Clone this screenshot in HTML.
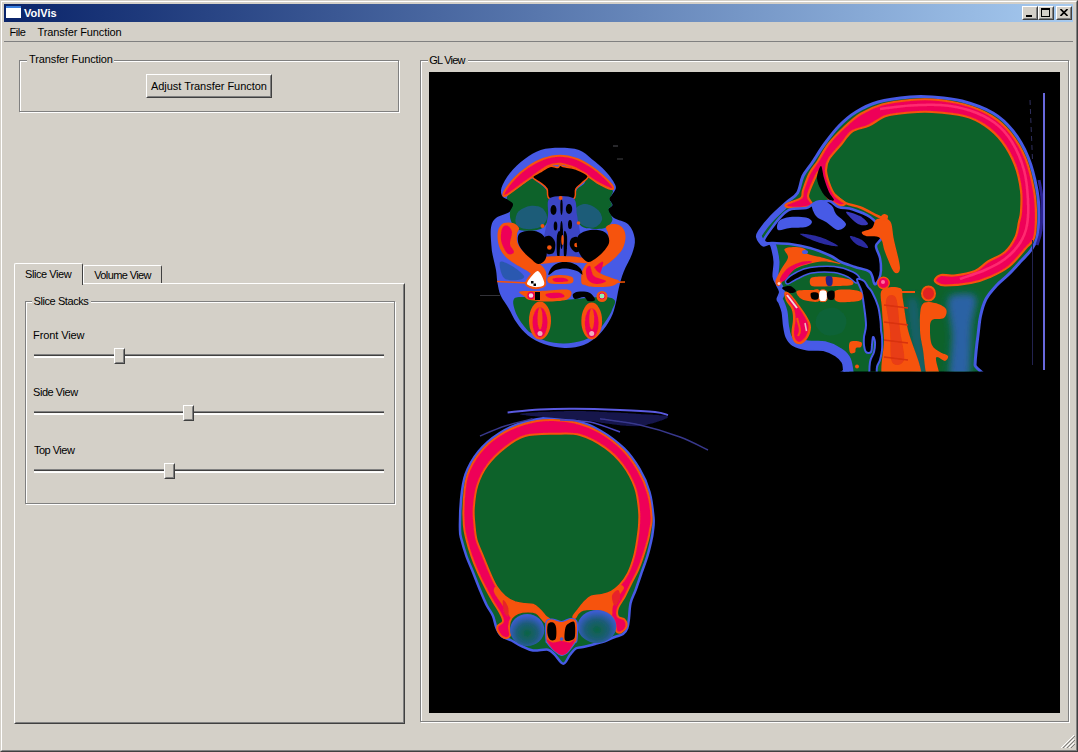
<!DOCTYPE html>
<html><head><meta charset="utf-8"><title>VolVis</title>
<style>
html,body{margin:0;padding:0;}
body{width:1078px;height:752px;overflow:hidden;background:#d4d0c8;font-family:"Liberation Sans","DejaVu Sans",sans-serif;font-size:11px;color:#000;position:relative;}
.abs{position:absolute;}
#win{position:absolute;left:0;top:0;width:1078px;height:752px;box-sizing:border-box;border:1px solid;border-color:#d4d0c8 #404040 #404040 #d4d0c8;}
#win2{position:absolute;left:1px;top:1px;width:1076px;height:750px;box-sizing:border-box;border:1px solid;border-color:#fff #808080 #808080 #fff;}
#title{position:absolute;left:4px;top:4px;width:1069px;height:18px;background:linear-gradient(90deg,#0a246a 0%,#a6caf0 100%);}
#title .t{position:absolute;left:20px;top:3px;line-height:12px;font-weight:bold;font-size:11px;color:#fff;letter-spacing:0px;}
#title .ico{position:absolute;left:2px;top:2px;width:15px;height:12px;background:#fff;border-top:2px solid #3a80e0;box-sizing:border-box;}
.tb{position:absolute;top:6px;width:16px;height:14px;box-sizing:border-box;background:#d4d0c8;border:1px solid;border-color:#fff #404040 #404040 #fff;}
.tb:after{content:"";position:absolute;left:0;top:0;right:0;bottom:0;border:1px solid;border-color:#d4d0c8 #808080 #808080 #d4d0c8;}
.menu{position:absolute;top:26px;font-size:11px;}
.hline{position:absolute;height:1px;}
.gb{position:absolute;box-sizing:border-box;border:1px solid #808080;box-shadow:1px 1px 0 #fff, inset 1px 1px 0 #fff;}
.gbl{position:absolute;background:#d4d0c8;padding:0 2px;font-size:11px;line-height:13px;}
.lbl{position:absolute;font-size:11px;line-height:13px;white-space:nowrap;}
.btn{position:absolute;box-sizing:border-box;background:#d4d0c8;border:1px solid;border-color:#fff #404040 #404040 #fff;text-align:center;font-size:11px;}
.btn:after{content:"";position:absolute;left:0;top:0;right:0;bottom:0;border:1px solid;border-color:#d4d0c8 #808080 #808080 #d4d0c8;}
.groove{position:absolute;height:4px;background:linear-gradient(#808080 0,#808080 1px,#404040 1px,#404040 2px,#f4f2ee 2px,#fff 3px,#fff 4px);}
.handle{position:absolute;width:11px;height:16px;box-sizing:border-box;background:#d4d0c8;border:1px solid;border-color:#fff #404040 #404040 #fff;}
.handle:after{content:"";position:absolute;left:0;top:0;right:0;bottom:0;border:1px solid;border-color:#d4d0c8 #808080 #808080 #d4d0c8;}
</style></head><body>
<div id="win"></div><div id="win2"></div>
<div id="title"><div class="ico"></div><div class="t">VolVis</div></div>
<div class="tb" style="left:1022px"><i style="position:absolute;left:3px;top:8px;width:6px;height:2px;background:#000"></i></div>
<div class="tb" style="left:1038px"><i style="position:absolute;left:2px;top:1px;width:9px;height:9px;box-sizing:border-box;border:1px solid #000;border-top-width:2px"></i></div>
<div class="tb" style="left:1056px"><svg style="position:absolute;left:3px;top:2px" width="8" height="7" viewBox="0 0 8 7"><path d="M0.5,0 L7.5,7 M7.5,0 L0.5,7" stroke="#000" stroke-width="1.6" fill="none"/></svg></div>
<div class="lbl" id="t1" style="left:9.4px;top:26px;letter-spacing:-0.420px">File</div>
<div class="lbl" id="t2" style="left:37.6px;top:26px;letter-spacing:-0.113px">Transfer Function</div>
<div class="hline" style="left:4px;top:41px;width:1069px;background:#808080"></div>

<div class="gb" style="left:19px;top:60px;width:380px;height:52px"></div>
<div class="gbl" style="left:27px;top:53px;width:87px;height:13px;padding:0"></div><div class="lbl" id="t3" style="left:29.0px;top:53px;letter-spacing:-0.113px">Transfer Function</div>
<div class="btn" style="left:146px;top:74px;width:126px;height:24px"></div><div class="lbl" id="t4" style="left:151.0px;top:80px;letter-spacing:-0.041px">Adjust Transfer Functon</div>

<!-- tabs -->
<div id="pane" class="abs" style="left:14px;top:283px;width:391px;height:441px;box-sizing:border-box;border:1px solid;border-color:#fff #404040 #404040 #fff"></div>
<div class="abs" style="left:15px;top:284px;width:389px;height:439px;box-sizing:border-box;border:1px solid;border-color:#d4d0c8 #808080 #808080 #d4d0c8"></div>
<div class="abs" id="tab1" style="left:14px;top:263px;width:69px;height:22px;box-sizing:border-box;background:#d4d0c8;border:1px solid;border-color:#fff #404040 #d4d0c8 #fff;border-bottom:none;border-radius:2px 2px 0 0"></div>
<div class="abs" id="tab2" style="left:83px;top:265px;width:79px;height:18px;box-sizing:border-box;background:#d4d0c8;border:1px solid;border-color:#fff #404040 #d4d0c8 #fff;border-bottom:none;border-radius:2px 2px 0 0"></div>
<div class="lbl" id="t5" style="left:25.1px;top:268px;letter-spacing:-0.450px">Slice View</div>
<div class="lbl" id="t6" style="left:94.2px;top:269px;letter-spacing:-0.612px">Volume View</div>

<div class="gb" style="left:25px;top:301px;width:370px;height:203px"></div>
<div class="gbl" style="left:32px;top:294px;width:59px;height:13px;padding:0"></div><div class="lbl" id="t7" style="left:33.5px;top:295px;letter-spacing:-0.417px">Slice Stacks</div>
<div class="lbl" id="t8" style="left:33.1px;top:329px;letter-spacing:-0.110px">Front View</div>
<div class="lbl" id="t9" style="left:33.1px;top:386px;letter-spacing:-0.461px">Side View</div>
<div class="lbl" id="t10" style="left:34.0px;top:444px;letter-spacing:-0.515px">Top View</div>
<div class="groove" style="left:34px;top:354px;width:350px"></div>
<div class="groove" style="left:34px;top:411px;width:350px"></div>
<div class="groove" style="left:34px;top:469px;width:350px"></div>
<div class="handle" style="left:114px;top:348px"></div>
<div class="handle" style="left:183px;top:405px"></div>
<div class="handle" style="left:164px;top:463px"></div>

<div class="gb" style="left:420px;top:60px;width:649px;height:662px"></div>
<div class="gbl" style="left:428px;top:53px;width:40px;height:13px;padding:0"></div><div class="lbl" id="t11" style="left:429.2px;top:54px;letter-spacing:-0.765px">GL View</div>
<svg id="gl" class="abs" style="left:429px;top:72px" width="631" height="641" viewBox="429 72 631 641">
<rect x="429" y="72" width="631" height="641" fill="#000"/>
<defs><filter id="bl" x="-5%" y="-5%" width="110%" height="110%"><feGaussianBlur stdDeviation="0.7"/></filter></defs>
<g filter="url(#bl)">
<clipPath id="sclip"><rect x="740" y="80" width="320" height="291.5"/></clipPath><g clip-path="url(#sclip)">
<clipPath id="silclip"><path d="M910.0,97.0 C919.0,96.2 923.3,96.3 932.0,97.0 C940.7,97.7 951.8,98.3 962.0,101.0 C972.2,103.7 984.5,108.0 993.0,113.0 C1001.5,118.0 1007.2,123.7 1013.0,131.0 C1018.8,138.3 1024.0,147.2 1028.0,157.0 C1032.0,166.8 1035.2,180.2 1037.0,190.0 C1038.8,199.8 1039.0,208.0 1039.0,216.0 C1039.0,224.0 1038.3,232.3 1037.0,238.0 C1035.7,243.7 1033.5,246.3 1031.0,250.0 C1028.5,253.7 1025.7,256.0 1022.0,260.0 C1018.3,264.0 1013.3,269.7 1009.0,274.0 C1004.7,278.3 999.8,281.8 996.0,286.0 C992.2,290.2 988.6,294.0 986.0,299.0 C983.4,304.0 981.8,310.0 980.5,316.0 C979.2,322.0 978.8,329.0 978.0,335.0 C977.2,341.0 976.5,347.0 976.0,352.0 C975.5,357.0 975.2,360.3 975.0,365.0 C974.8,369.7 996.5,377.5 975.0,380.0 C953.5,382.5 867.8,381.7 846.0,380.0 C824.2,378.3 845.0,373.0 844.5,370.0 C844.0,367.0 844.4,364.5 843.0,362.0 C841.6,359.5 839.2,357.1 836.0,355.0 C832.8,352.9 828.3,350.5 823.5,349.5 C818.7,348.5 812.1,349.8 807.0,349.0 C801.9,348.2 796.3,346.5 793.0,344.5 C789.7,342.5 788.4,340.1 787.0,337.0 C785.6,333.9 785.2,330.2 784.5,326.0 C783.8,321.8 783.8,315.8 783.0,312.0 C782.2,308.2 780.8,305.2 780.0,303.0 C779.2,300.8 777.9,300.8 778.0,299.0 C778.1,297.2 780.6,294.3 780.5,292.0 C780.4,289.7 778.6,287.6 777.5,285.0 C776.4,282.4 774.4,280.3 774.0,276.5 C773.6,272.7 775.2,266.4 775.0,262.0 C774.8,257.6 773.8,253.1 773.0,250.0 C772.2,246.9 771.7,244.3 770.0,243.5 C768.3,242.7 765.1,246.1 763.0,245.0 C760.9,243.9 758.0,239.4 757.5,237.0 C757.0,234.6 757.8,233.8 760.0,230.5 C762.2,227.2 766.5,221.8 771.0,217.0 C775.5,212.2 782.6,206.0 787.0,202.0 C791.4,198.0 794.8,197.3 797.5,193.0 C800.2,188.7 800.6,181.0 803.0,176.0 C805.4,171.0 808.4,168.3 812.0,163.0 C815.6,157.7 820.0,150.2 824.5,144.0 C829.0,137.8 833.8,131.3 839.0,126.0 C844.2,120.7 849.5,116.0 856.0,112.0 C862.5,108.0 869.0,104.5 878.0,102.0 C887.0,99.5 901.0,97.8 910.0,97.0 Z"/></clipPath>
<path d="M910.0,97.0 C919.0,96.2 923.3,96.3 932.0,97.0 C940.7,97.7 951.8,98.3 962.0,101.0 C972.2,103.7 984.5,108.0 993.0,113.0 C1001.5,118.0 1007.2,123.7 1013.0,131.0 C1018.8,138.3 1024.0,147.2 1028.0,157.0 C1032.0,166.8 1035.2,180.2 1037.0,190.0 C1038.8,199.8 1039.0,208.0 1039.0,216.0 C1039.0,224.0 1038.3,232.3 1037.0,238.0 C1035.7,243.7 1033.5,246.3 1031.0,250.0 C1028.5,253.7 1025.7,256.0 1022.0,260.0 C1018.3,264.0 1013.3,269.7 1009.0,274.0 C1004.7,278.3 999.8,281.8 996.0,286.0 C992.2,290.2 988.6,294.0 986.0,299.0 C983.4,304.0 981.8,310.0 980.5,316.0 C979.2,322.0 978.8,329.0 978.0,335.0 C977.2,341.0 976.5,347.0 976.0,352.0 C975.5,357.0 975.2,360.3 975.0,365.0 C974.8,369.7 996.5,377.5 975.0,380.0 C953.5,382.5 867.8,381.7 846.0,380.0 C824.2,378.3 845.0,373.0 844.5,370.0 C844.0,367.0 844.4,364.5 843.0,362.0 C841.6,359.5 839.2,357.1 836.0,355.0 C832.8,352.9 828.3,350.5 823.5,349.5 C818.7,348.5 812.1,349.8 807.0,349.0 C801.9,348.2 796.3,346.5 793.0,344.5 C789.7,342.5 788.4,340.1 787.0,337.0 C785.6,333.9 785.2,330.2 784.5,326.0 C783.8,321.8 783.8,315.8 783.0,312.0 C782.2,308.2 780.8,305.2 780.0,303.0 C779.2,300.8 777.9,300.8 778.0,299.0 C778.1,297.2 780.6,294.3 780.5,292.0 C780.4,289.7 778.6,287.6 777.5,285.0 C776.4,282.4 774.4,280.3 774.0,276.5 C773.6,272.7 775.2,266.4 775.0,262.0 C774.8,257.6 773.8,253.1 773.0,250.0 C772.2,246.9 771.7,244.3 770.0,243.5 C768.3,242.7 765.1,246.1 763.0,245.0 C760.9,243.9 758.0,239.4 757.5,237.0 C757.0,234.6 757.8,233.8 760.0,230.5 C762.2,227.2 766.5,221.8 771.0,217.0 C775.5,212.2 782.6,206.0 787.0,202.0 C791.4,198.0 794.8,197.3 797.5,193.0 C800.2,188.7 800.6,181.0 803.0,176.0 C805.4,171.0 808.4,168.3 812.0,163.0 C815.6,157.7 820.0,150.2 824.5,144.0 C829.0,137.8 833.8,131.3 839.0,126.0 C844.2,120.7 849.5,116.0 856.0,112.0 C862.5,108.0 869.0,104.5 878.0,102.0 C887.0,99.5 901.0,97.8 910.0,97.0 Z" fill="#0a622c" stroke="#465ae6" stroke-width="3"/>
<path d="M787.0,202.0 C784.3,204.5 775.5,212.2 771.0,217.0 C766.5,221.8 762.2,227.2 760.0,230.5 C757.8,233.8 757.0,234.6 757.5,237.0 C758.0,239.4 760.9,243.9 763.0,245.0 C765.1,246.1 768.3,242.7 770.0,243.5 C771.7,244.3 772.2,246.9 773.0,250.0 C773.8,253.1 774.8,257.6 775.0,262.0 C775.2,266.4 773.6,272.7 774.0,276.5 C774.4,280.3 776.4,282.4 777.5,285.0 C778.6,287.6 780.4,289.7 780.5,292.0 C780.6,294.3 778.1,297.2 778.0,299.0 C777.9,300.8 779.2,300.8 780.0,303.0 C780.8,305.2 782.2,308.2 783.0,312.0 C783.8,315.8 783.8,321.8 784.5,326.0 C785.2,330.2 785.6,333.9 787.0,337.0 C788.4,340.1 789.7,342.5 793.0,344.5 C796.3,346.5 801.9,348.2 807.0,349.0 C812.1,349.8 818.7,348.5 823.5,349.5 C828.3,350.5 832.8,352.9 836.0,355.0 C839.2,357.1 841.6,359.5 843.0,362.0 C844.4,364.5 844.0,367.0 844.5,370.0 C845.0,373.0 845.8,378.3 846.0,380.0" fill="none" stroke="#465ae6" stroke-width="9" clip-path="url(#silclip)" stroke-linejoin="round"/>
<path d="M793.0,344.5 C795.3,345.2 801.9,348.2 807.0,349.0 C812.1,349.8 818.7,348.5 823.5,349.5 C828.3,350.5 832.8,352.9 836.0,355.0 C839.2,357.1 841.3,357.8 843.0,362.0 C844.7,366.2 845.5,377.0 846.0,380.0" fill="none" stroke="#465ae6" stroke-width="17" clip-path="url(#silclip)"/>
<defs><linearGradient id="nk" x1="0" x2="1"><stop offset="0" stop-color="#0a642c"/><stop offset="0.45" stop-color="#2c6098"/><stop offset="0.8" stop-color="#146460"/><stop offset="1" stop-color="#0a642c"/></linearGradient></defs>
<filter id="bl3" x="-30%" y="-30%" width="160%" height="160%"><feGaussianBlur stdDeviation="3.5"/></filter>
<g clip-path="url(#silclip)">
<path d="M948.0,300.0 C949.7,293.2 957.3,294.3 962.0,294.0 C966.7,293.7 974.3,292.8 976.0,298.0 C977.7,303.2 973.3,310.5 972.0,325.0 C970.7,339.5 971.7,375.0 968.0,385.0 C964.3,395.0 952.7,393.3 950.0,385.0 C947.3,376.7 952.3,349.2 952.0,335.0 C951.7,320.8 946.3,306.8 948.0,300.0 Z" fill="#2c62a4" filter="url(#bl3)"/>
</g>
<path d="M907.0,300.0 C908.3,294.2 915.5,295.0 918.0,300.0 C920.5,305.0 920.3,317.3 922.0,330.0 C923.7,342.7 928.7,368.3 928.0,376.0 C927.3,383.7 921.0,382.8 918.0,376.0 C915.0,369.2 911.8,347.7 910.0,335.0 C908.2,322.3 905.7,305.8 907.0,300.0 Z" fill="#14606a" filter="url(#bl3)"/>
<path d="M820.0,312.0 C823.2,309.2 830.7,307.0 835.0,308.0 C839.3,309.0 844.8,314.0 846.0,318.0 C847.2,322.0 845.3,329.2 842.0,332.0 C838.7,334.8 830.3,336.2 826.0,335.0 C821.7,333.8 817.0,328.8 816.0,325.0 C815.0,321.2 816.8,314.8 820.0,312.0 Z" fill="#0b6338"/>
<path d="M910.0,100.0 C918.3,99.2 923.0,98.8 932.0,99.5 C941.0,100.2 954.1,101.8 964.0,104.5 C973.9,107.2 983.8,111.2 991.5,116.0 C999.2,120.8 1004.8,125.9 1010.5,133.0 C1016.2,140.1 1021.6,148.9 1025.5,158.5 C1029.4,168.1 1032.2,180.9 1034.0,190.5 C1035.8,200.1 1036.0,208.1 1036.0,216.0 C1036.0,223.9 1035.7,232.7 1034.0,238.0 C1032.3,243.3 1030.2,243.2 1026.0,248.0 C1021.8,252.8 1015.0,261.7 1009.0,266.5 C1003.0,271.3 996.3,274.2 990.0,277.0 C983.7,279.8 978.5,281.6 971.0,283.0 C963.5,284.4 950.7,285.5 945.0,285.5 C939.3,285.5 938.7,284.0 937.0,283.0 C935.3,282.0 934.3,280.8 935.0,279.5 C935.7,278.2 937.8,275.7 941.0,275.0 C944.2,274.3 948.3,276.2 954.0,275.5 C959.7,274.8 969.3,273.3 975.0,271.0 C980.7,268.7 983.0,264.7 988.0,261.5 C993.0,258.3 1000.4,256.1 1005.0,252.0 C1009.6,247.9 1013.2,242.0 1015.5,237.0 C1017.8,232.0 1018.1,226.2 1019.0,222.0 C1019.9,217.8 1020.7,217.2 1021.0,212.0 C1021.3,206.8 1022.0,198.3 1021.0,190.5 C1020.0,182.7 1018.2,173.2 1015.0,165.0 C1011.8,156.8 1007.0,148.1 1002.0,141.5 C997.0,134.9 991.3,129.8 985.0,125.5 C978.7,121.2 972.8,118.2 964.0,116.0 C955.2,113.8 941.0,112.6 932.0,112.0 C923.0,111.4 917.7,111.8 910.0,112.5 C902.3,113.2 892.8,113.8 886.0,116.0 C879.2,118.2 874.7,122.9 869.0,125.5 C863.3,128.1 856.6,128.4 852.0,131.5 C847.4,134.6 845.3,139.4 841.5,144.0 C837.7,148.6 831.6,154.7 829.0,159.0 C826.4,163.3 826.0,166.0 826.0,170.0 C826.0,174.0 827.5,178.8 829.0,183.0 C830.5,187.2 832.3,191.7 835.0,195.0 C837.7,198.3 844.3,201.3 845.0,203.0 C845.7,204.7 841.8,205.8 839.0,205.0 C836.2,204.2 830.8,201.2 828.0,198.0 C825.2,194.8 823.5,190.3 822.0,186.0 C820.5,181.7 820.3,173.0 819.0,172.0 C817.7,171.0 815.8,176.0 814.0,180.0 C812.2,184.0 808.3,192.0 808.0,196.0 C807.7,200.0 812.3,202.2 812.0,204.0 C811.7,205.8 809.7,206.4 806.0,207.0 C802.3,207.6 793.3,207.9 790.0,207.5 C786.7,207.1 784.2,206.1 786.0,204.5 C787.8,202.9 798.2,200.3 801.0,198.0 C803.8,195.7 801.6,194.6 803.0,190.5 C804.4,186.4 807.0,178.4 809.5,173.5 C812.0,168.6 814.8,165.9 818.0,161.0 C821.2,156.1 824.2,149.5 828.5,144.0 C832.8,138.5 838.2,133.0 843.5,128.0 C848.8,123.0 854.1,117.9 860.5,114.0 C866.9,110.1 873.8,106.8 882.0,104.5 C890.2,102.2 901.7,100.8 910.0,100.0 Z" fill="#ee0458" stroke="#f65208" stroke-width="2.2"/>
<path d="M880.0,109.0 C885.0,108.4 900.0,106.2 910.0,105.5 C920.0,104.8 930.0,104.2 940.0,105.0 C950.0,105.8 960.8,107.5 970.0,110.5 C979.2,113.5 988.0,117.8 995.0,123.0 C1002.0,128.2 1007.2,134.2 1012.0,142.0 C1016.8,149.8 1021.3,160.3 1024.0,170.0 C1026.7,179.7 1027.5,190.8 1028.0,200.0 C1028.5,209.2 1028.3,217.8 1027.0,225.0 C1025.7,232.2 1023.7,237.3 1020.0,243.0 C1016.3,248.7 1010.8,254.5 1005.0,259.0 C999.2,263.5 992.5,266.7 985.0,270.0 C977.5,273.3 964.2,277.5 960.0,279.0" fill="none" stroke="#ff2a70" stroke-width="2.5"/>
<path d="M821.0,166.0 C822.2,166.0 822.7,173.7 824.0,178.0 C825.3,182.3 827.3,188.3 829.0,192.0 C830.7,195.7 834.2,198.8 834.0,200.0 C833.8,201.2 830.2,200.7 828.0,199.0 C825.8,197.3 822.8,193.5 821.0,190.0 C819.2,186.5 817.0,182.0 817.0,178.0 C817.0,174.0 819.8,166.0 821.0,166.0 Z" fill="#000"/>
<path d="M835.0,195.0 C836.8,196.3 841.2,200.9 845.5,203.0 C849.8,205.1 855.2,205.3 860.5,207.5 C865.8,209.7 872.9,213.8 877.5,216.0 C882.1,218.2 886.2,220.2 888.0,221.0" fill="none" stroke="#f65208" stroke-width="2.5"/>
<path d="M766.0,243.0 C764.5,242.4 763.2,241.8 764.0,239.5 C764.8,237.2 768.2,232.8 771.0,229.0 C773.8,225.2 777.3,220.2 780.5,217.0 C783.7,213.8 785.8,211.0 790.0,209.5 C794.2,208.0 802.0,208.9 806.0,208.0 C810.0,207.1 810.2,205.2 814.0,204.0 C817.8,202.8 824.9,200.5 829.0,201.0 C833.1,201.5 834.5,205.6 838.5,207.0 C842.5,208.4 847.8,207.8 853.0,209.5 C858.2,211.2 865.4,213.8 870.0,217.0 C874.6,220.2 878.6,225.0 880.5,228.5 C882.4,232.0 882.2,235.1 881.5,238.0 C880.8,240.9 876.2,242.7 876.0,246.0 C875.8,249.3 879.2,254.0 880.0,258.0 C880.8,262.0 881.2,266.5 881.0,270.0 C880.8,273.5 880.1,276.7 879.0,279.0 C877.9,281.3 876.0,285.2 874.5,284.0 C873.0,282.8 873.2,274.8 870.0,272.0 C866.8,269.2 859.8,268.7 855.0,267.0 C850.2,265.3 845.2,263.9 841.0,262.0 C836.8,260.1 835.2,257.8 830.0,255.5 C824.8,253.2 816.7,249.9 810.0,248.0 C803.3,246.1 796.2,244.8 790.0,244.0 C783.8,243.2 777.0,243.2 773.0,243.0 C769.0,242.8 767.5,243.6 766.0,243.0 Z" fill="#000" stroke="#465ae6" stroke-width="2.5"/>
<path d="M779.0,221.0 C781.0,218.8 785.5,217.6 790.0,217.0 C794.5,216.4 802.3,216.7 806.0,217.5 C809.7,218.3 812.0,220.4 812.0,222.0 C812.0,223.6 809.7,226.0 806.0,227.0 C802.3,228.0 794.7,227.5 790.0,228.0 C785.3,228.5 779.8,231.2 778.0,230.0 C776.2,228.8 777.0,223.2 779.0,221.0 Z" fill="#465ae6"/>
<path d="M812.0,204.0 C813.0,201.3 818.7,199.7 822.0,200.0 C825.3,200.3 829.7,203.7 832.0,206.0 C834.3,208.3 833.7,211.0 836.0,214.0 C838.3,217.0 845.7,221.3 846.0,224.0 C846.3,226.7 841.3,230.3 838.0,230.0 C834.7,229.7 829.7,224.3 826.0,222.0 C822.3,219.7 818.3,219.0 816.0,216.0 C813.7,213.0 811.0,206.7 812.0,204.0 Z" fill="#465ae6"/>
<path d="M846.0,212.0 C846.3,210.7 856.3,214.0 860.0,216.0 C863.7,218.0 868.3,222.7 868.0,224.0 C867.7,225.3 861.7,226.0 858.0,224.0 C854.3,222.0 845.7,213.3 846.0,212.0 Z" fill="#3838b8"/>
<path d="M800.0,234.0 C800.0,233.0 813.7,235.0 820.0,237.0 C826.3,239.0 838.0,245.0 838.0,246.0 C838.0,247.0 826.3,245.0 820.0,243.0 C813.7,241.0 800.0,235.0 800.0,234.0 Z" fill="#2c2ca0"/>
<path d="M850.0,236.0 C851.0,235.3 859.0,238.0 862.0,240.0 C865.0,242.0 869.0,247.3 868.0,248.0 C867.0,248.7 859.0,246.0 856.0,244.0 C853.0,242.0 849.0,236.7 850.0,236.0 Z" fill="#2c2ca0"/>
<path d="M877.0,219.0 C880.0,217.8 887.2,217.5 890.0,221.0 C892.8,224.5 892.3,232.2 894.0,240.0 C895.7,247.8 900.0,262.7 900.0,268.0 C900.0,273.3 896.5,274.7 894.0,272.0 C891.5,269.3 887.3,257.7 885.0,252.0 C882.7,246.3 883.2,240.7 880.0,238.0 C876.8,235.3 869.0,237.0 866.0,236.0 C863.0,235.0 861.0,233.3 862.0,232.0 C863.0,230.7 869.5,230.2 872.0,228.0 C874.5,225.8 874.0,220.2 877.0,219.0 Z" fill="#f65208"/>
<path d="M880.0,218.0 C879.7,216.8 882.7,214.3 884.0,214.0 C885.3,213.7 887.7,214.8 888.0,216.0 C888.3,217.2 887.3,220.7 886.0,221.0 C884.7,221.3 880.3,219.2 880.0,218.0 Z" fill="#f65208"/>
<path d="M786.0,280.0 C787.5,278.0 793.0,274.1 797.0,272.0 C801.0,269.9 803.8,268.4 810.0,267.5 C816.2,266.6 826.8,265.8 834.0,266.5 C841.2,267.2 848.7,269.9 853.0,272.0 C857.3,274.1 859.5,277.2 860.0,279.0 C860.5,280.8 858.0,283.3 856.0,283.0 C854.0,282.7 851.7,278.8 848.0,277.0 C844.3,275.2 840.0,273.2 834.0,272.5 C828.0,271.8 818.2,271.9 812.0,273.0 C805.8,274.1 801.0,277.2 797.0,279.0 C793.0,280.8 789.8,283.8 788.0,284.0 C786.2,284.2 784.5,282.0 786.0,280.0 Z" fill="#000" stroke="#465ae6" stroke-width="1.5"/>
<path d="M857.0,279.5 C857.4,277.8 862.2,279.8 864.0,281.0 C865.8,282.2 866.7,285.2 868.0,287.0 C869.3,288.8 870.3,288.8 872.0,292.0 C873.7,295.2 876.6,301.2 878.0,306.0 C879.4,310.8 880.0,317.0 880.5,321.0 C881.0,325.0 880.8,327.3 881.0,330.0 C881.2,332.7 881.8,333.7 882.0,337.0 C882.2,340.3 882.3,346.2 882.0,350.0 C881.7,353.8 880.8,357.2 880.0,360.0 C879.2,362.8 877.7,363.7 877.0,367.0 C876.3,370.3 877.2,377.8 876.0,380.0 C874.8,382.2 871.0,383.0 870.0,380.0 C869.0,377.0 869.3,366.7 870.0,362.0 C870.7,357.3 873.2,355.3 874.0,352.0 C874.8,348.7 875.2,344.5 875.0,342.0 C874.8,339.5 873.5,336.5 873.0,337.0 C872.5,337.5 872.3,342.5 872.0,345.0 C871.7,347.5 872.0,350.8 871.0,352.0 C870.0,353.2 867.2,353.2 866.0,352.0 C864.8,350.8 864.3,347.5 864.0,345.0 C863.7,342.5 863.7,340.3 864.0,337.0 C864.3,333.7 866.0,330.2 866.0,325.0 C866.0,319.8 864.8,311.7 864.0,306.0 C863.2,300.3 862.7,295.4 861.5,291.0 C860.3,286.6 856.6,281.2 857.0,279.5 Z" fill="#000" stroke="#465ae6" stroke-width="2"/>
<path d="M782.0,288.0 C782.0,286.8 787.7,285.5 790.0,286.0 C792.3,286.5 796.0,289.8 796.0,291.0 C796.0,292.2 792.3,293.5 790.0,293.0 C787.7,292.5 782.0,289.2 782.0,288.0 Z" fill="#000"/>
<path d="M784.5,249.0 C785.8,247.2 792.6,247.0 796.0,247.0 C799.4,247.0 803.0,247.8 805.0,249.0 C807.0,250.2 804.8,252.5 808.0,254.0 C811.2,255.5 818.5,256.3 824.0,258.0 C829.5,259.7 841.3,263.4 841.0,264.0 C840.7,264.6 829.2,260.9 822.0,261.5 C814.8,262.1 804.0,265.0 798.0,267.5 C792.0,270.0 789.2,273.4 786.0,276.5 C782.8,279.6 780.8,285.2 779.0,286.0 C777.2,286.8 775.2,284.2 775.5,281.5 C775.8,278.8 778.9,273.5 781.0,269.5 C783.1,265.5 787.4,260.9 788.0,257.5 C788.6,254.1 783.2,250.8 784.5,249.0 Z" fill="#f65208"/>
<path d="M780.0,279.0 C780.7,276.8 784.2,270.9 788.0,268.0 C791.8,265.1 799.0,262.5 803.0,261.5 C807.0,260.5 813.2,260.9 812.0,262.0 C810.8,263.1 800.7,264.8 796.0,268.0 C791.3,271.2 786.7,279.2 784.0,281.0 C781.3,282.8 779.3,281.2 780.0,279.0 Z" fill="#ee0458"/>
<circle cx="779" cy="283.5" r="1.5" fill="#ffd0d8"/>
<ellipse cx="805" cy="252" rx="3" ry="2" fill="#465ae6"/>
<path d="M811.0,278.0 C812.8,276.5 817.8,276.7 822.0,276.5 C826.2,276.3 831.2,276.4 836.0,277.0 C840.8,277.6 848.3,278.7 851.0,280.0 C853.7,281.3 854.5,284.0 852.0,285.0 C849.5,286.0 841.3,285.8 836.0,286.0 C830.7,286.2 824.2,286.6 820.0,286.5 C815.8,286.4 812.5,286.9 811.0,285.5 C809.5,284.1 809.2,279.5 811.0,278.0 Z" fill="#f65208"/>
<path d="M826.0,277.0 C826.8,275.7 831.0,275.7 832.0,277.0 C833.0,278.3 832.8,283.7 832.0,285.0 C831.2,286.3 828.0,286.3 827.0,285.0 C826.0,283.7 825.2,278.3 826.0,277.0 Z" fill="#20208a"/>
<path d="M797.0,291.0 C799.0,289.7 808.3,290.2 812.0,290.0 C815.7,289.8 817.8,288.2 819.0,290.0 C820.2,291.8 820.8,299.2 819.0,301.0 C817.2,302.8 811.2,301.5 808.0,301.0 C804.8,300.5 801.8,299.7 800.0,298.0 C798.2,296.3 795.0,292.3 797.0,291.0 Z" fill="#f65208"/>
<path d="M835.0,291.0 C837.0,289.1 843.7,289.3 848.0,289.5 C852.3,289.7 858.8,290.2 861.0,292.0 C863.2,293.8 863.2,298.3 861.0,300.0 C858.8,301.7 852.2,301.8 848.0,302.0 C843.8,302.2 838.2,302.8 836.0,301.0 C833.8,299.2 833.0,292.9 835.0,291.0 Z" fill="#f65208"/>
<path d="M819.5,291.0 C820.7,289.4 825.3,289.4 826.5,291.0 C827.7,292.6 827.7,298.9 826.5,300.5 C825.3,302.1 820.7,302.1 819.5,300.5 C818.3,298.9 818.3,292.6 819.5,291.0 Z" fill="#fff" stroke="#f65208" stroke-width="1"/>
<path d="M827.5,292.0 C828.5,290.7 832.9,289.8 834.0,291.0 C835.1,292.2 835.0,297.7 834.0,299.0 C833.0,300.3 829.1,300.2 828.0,299.0 C826.9,297.8 826.5,293.3 827.5,292.0 Z" fill="#000"/>
<path d="M811.0,293.0 C812.0,292.0 816.8,292.0 818.0,293.0 C819.2,294.0 819.0,298.0 818.0,299.0 C817.0,300.0 813.2,300.0 812.0,299.0 C810.8,298.0 810.0,294.0 811.0,293.0 Z" fill="#000"/>
<path d="M784.5,292.3 C785.2,291.1 787.4,291.4 790.0,293.7 C792.6,296.0 797.0,302.1 800.0,306.3 C803.0,310.5 806.5,315.5 808.3,319.0 C810.1,322.5 811.0,324.3 811.0,327.3 C811.0,330.3 809.9,334.2 808.3,337.0 C806.7,339.8 803.6,343.2 801.3,344.0 C799.0,344.8 795.9,343.8 794.3,342.0 C792.7,340.2 791.7,336.8 791.5,333.0 C791.3,329.2 793.0,323.0 793.0,319.0 C793.0,315.0 792.7,312.1 791.5,309.0 C790.3,305.9 787.2,303.5 786.0,300.7 C784.8,297.9 783.8,293.5 784.5,292.3 Z" fill="#f65208"/>
<path d="M786.5,294.5 C786.8,293.8 787.9,293.8 790.0,296.0 C792.1,298.2 796.2,304.0 799.0,308.0 C801.8,312.0 804.9,316.8 806.5,320.0 C808.1,323.2 808.6,324.8 808.5,327.5 C808.4,330.2 807.3,333.7 806.0,336.0 C804.7,338.3 802.2,340.8 800.5,341.5 C798.8,342.2 797.1,341.4 796.0,340.0 C794.9,338.6 794.1,336.5 794.0,333.0 C793.9,329.5 795.5,323.0 795.5,319.0 C795.5,315.0 795.2,312.2 794.0,309.0 C792.8,305.8 789.2,302.4 788.0,300.0 C786.8,297.6 786.2,295.2 786.5,294.5 Z" fill="#ee0458"/>
<path d="M787.0,295.0 L797.0,308.0" fill="none" stroke="#f4dcd8" stroke-width="2"/>
<path d="M805.0,323.0 L806.5,331.0" fill="none" stroke="#f0b8c0" stroke-width="1.5"/>
<path d="M797.0,318.0 C797.5,320.0 799.8,327.0 800.0,330.0 C800.2,333.0 798.3,335.0 798.0,336.0" fill="none" stroke="#f65208" stroke-width="2"/>
<path d="M850.0,342.0 C851.8,340.2 859.2,341.2 861.0,342.0 C862.8,342.8 861.8,346.0 861.0,347.0 C860.2,348.0 857.0,347.1 856.0,348.0 C855.0,348.9 856.0,351.8 855.0,352.5 C854.0,353.2 850.8,354.2 850.0,352.5 C849.2,350.8 848.2,343.8 850.0,342.0 Z" fill="#f65208"/>
<circle cx="857" cy="366.5" r="2" fill="#f65208"/>
<path d="M882.0,290.0 C885.0,286.3 896.5,286.3 900.0,288.0 C903.5,289.7 901.7,293.0 903.0,300.0 C904.3,307.0 905.0,316.7 908.0,330.0 C911.0,343.3 925.0,371.7 921.0,380.0 C917.0,388.3 890.2,386.7 884.0,380.0 C877.8,373.3 884.3,351.7 884.0,340.0 C883.7,328.3 882.3,318.3 882.0,310.0 C881.7,301.7 879.0,293.7 882.0,290.0 Z" fill="#f65208"/>
<path d="M886.0,300.0 C887.0,294.7 893.7,293.0 896.0,298.0 C898.3,303.0 898.7,319.7 900.0,330.0 C901.3,340.3 905.3,354.7 904.0,360.0 C902.7,365.3 894.3,367.0 892.0,362.0 C889.7,357.0 891.0,340.3 890.0,330.0 C889.0,319.7 885.0,305.3 886.0,300.0 Z" fill="#e83c14"/>
<path d="M884.0,305.0 L908.0,308.0" fill="none" stroke="#d83010" stroke-width="1.5"/>
<path d="M884.0,322.0 L908.0,325.0" fill="none" stroke="#d83010" stroke-width="1.5"/>
<path d="M884.0,340.0 L908.0,343.0" fill="none" stroke="#d83010" stroke-width="1.5"/>
<path d="M884.0,357.0 L908.0,360.0" fill="none" stroke="#d83010" stroke-width="1.5"/>
<circle cx="883.5" cy="283" r="5.7" fill="#ee0458" stroke="#f65208" stroke-width="1.5"/>
<circle cx="883" cy="282" r="2" fill="#ff70a0"/>
<path d="M900.0,292.0 L915.0,292.0" fill="none" stroke="#f65208" stroke-width="2"/>
<ellipse cx="928.5" cy="293.5" rx="6.5" ry="7" fill="#e02020" stroke="#f65208" stroke-width="2"/>
<path d="M922.0,305.0 C924.5,300.5 931.0,302.3 935.0,303.0 C939.0,303.7 944.5,306.5 946.0,309.0 C947.5,311.5 946.3,316.2 944.0,318.0 C941.7,319.8 934.3,318.0 932.0,320.0 C929.7,322.0 930.0,325.8 930.0,330.0 C930.0,334.2 930.3,341.3 932.0,345.0 C933.7,348.7 937.3,350.2 940.0,352.0 C942.7,353.8 947.2,354.5 948.0,356.0 C948.8,357.5 947.0,360.7 945.0,361.0 C943.0,361.3 936.8,354.8 936.0,358.0 C935.2,361.2 941.3,376.3 940.0,380.0 C938.7,383.7 930.8,385.0 928.0,380.0 C925.2,375.0 924.3,358.3 923.0,350.0 C921.7,341.7 920.2,337.5 920.0,330.0 C919.8,322.5 919.5,309.5 922.0,305.0 Z" fill="#f65208"/>
<path d="M1039.0,180.0 C1039.5,183.3 1041.7,191.7 1042.0,200.0 C1042.3,208.3 1041.8,222.5 1041.0,230.0 C1040.2,237.5 1037.7,242.5 1037.0,245.0" fill="none" stroke="#2a2490" stroke-width="3"/>
<rect x="1043" y="93" width="2" height="277" fill="#6868dc"/>
<path d="M1030.0,100.0 L1032.5,160.0" fill="none" stroke="#303060" stroke-width="1" stroke-dasharray="5 4"/>
<rect x="1032" y="240" width="1" height="125" fill="#202050"/>
</g>
<path d="M559.8,147.8 C566.2,147.8 573.7,148.1 579.0,150.0 C584.3,151.9 587.2,155.4 591.7,159.0 C596.2,162.6 602.0,167.2 606.0,171.7 C610.0,176.2 614.6,182.3 615.7,186.0 C616.8,189.7 613.6,191.9 612.5,194.0 C611.4,196.1 609.0,197.0 609.0,198.8 C609.0,200.6 612.7,203.1 612.5,205.0 C612.3,206.9 607.8,207.8 608.0,210.0 C608.2,212.2 610.6,215.6 614.0,218.0 C617.4,220.4 624.9,221.0 628.4,224.4 C631.9,227.8 634.2,233.8 634.8,238.7 C635.4,243.6 633.9,248.5 632.0,254.0 C630.1,259.5 625.9,266.1 623.7,271.7 C621.5,277.3 620.2,282.4 618.9,287.7 C617.6,293.0 617.0,298.6 615.7,303.6 C614.4,308.7 613.6,312.9 610.9,318.0 C608.2,323.1 604.2,329.5 599.7,334.0 C595.2,338.5 589.6,342.7 583.7,345.0 C577.9,347.3 571.2,348.2 564.6,348.0 C558.0,347.8 549.9,346.1 543.8,344.0 C537.7,341.9 532.5,339.0 528.0,335.5 C523.5,332.0 519.9,327.3 516.7,322.8 C513.5,318.3 511.4,312.9 508.7,308.4 C506.0,303.9 502.6,299.8 500.7,295.6 C498.8,291.4 498.3,287.3 497.5,283.0 C496.7,278.7 496.8,274.6 496.0,270.0 C495.2,265.4 493.6,259.6 492.8,255.7 C492.1,251.8 491.8,251.4 491.5,246.7 C491.2,242.0 490.2,232.4 491.0,227.6 C491.8,222.8 492.8,220.7 496.0,218.0 C499.2,215.3 507.1,214.3 510.0,211.6 C512.9,208.9 514.7,204.4 513.5,202.0 C512.3,199.6 505.0,199.4 503.0,197.0 C501.0,194.6 500.3,191.7 501.5,187.7 C502.7,183.7 506.1,177.8 510.0,173.0 C513.9,168.2 519.6,162.8 524.7,159.0 C529.8,155.2 534.9,151.9 540.7,150.0 C546.6,148.1 553.4,147.8 559.8,147.8 Z" fill="#465ae6"/>
<path d="M513.5,300.0 C514.7,297.0 516.2,297.0 524.0,297.0 C531.8,297.0 547.3,300.0 560.0,300.0 C572.7,300.0 590.9,297.0 600.0,297.0 C609.1,297.0 612.5,297.8 614.5,300.0 C616.5,302.2 613.1,307.0 612.0,310.0 C610.9,313.0 610.0,314.5 607.7,318.0 C605.4,321.5 602.0,327.1 598.0,330.8 C594.0,334.5 589.4,338.2 583.7,340.3 C578.0,342.4 570.3,343.4 564.0,343.5 C557.7,343.6 551.2,342.6 546.0,341.0 C540.8,339.4 536.3,336.0 533.0,334.0 C529.7,332.0 529.0,332.2 526.3,329.0 C523.6,325.8 518.8,319.6 516.7,314.8 C514.6,310.0 512.3,303.0 513.5,300.0 Z" fill="#0a622c"/>
<path d="M500.0,262.0 C501.3,260.0 508.0,263.7 512.0,266.0 C516.0,268.3 523.0,273.7 524.0,276.0 C525.0,278.3 521.3,279.7 518.0,280.0 C514.7,280.3 507.0,281.0 504.0,278.0 C501.0,275.0 498.7,264.0 500.0,262.0 Z" fill="#2c58b0"/>
<path d="M507.0,197.0 C508.4,193.9 517.2,188.6 521.5,185.5 C525.8,182.4 530.0,179.0 532.7,178.5 C535.4,178.0 535.6,180.9 537.5,182.3 C539.4,183.7 542.1,185.4 543.8,187.0 C545.5,188.6 546.7,189.9 547.8,192.0 C548.9,194.1 549.8,196.5 550.2,199.8 C550.6,203.1 550.7,207.8 550.2,211.6 C549.7,215.4 548.6,219.9 547.0,222.8 C545.4,225.7 543.9,227.7 540.7,229.0 C537.5,230.3 531.9,230.8 527.9,230.8 C523.9,230.8 519.5,230.6 516.7,229.0 C513.9,227.4 512.1,223.8 511.0,221.0 C509.9,218.2 509.7,214.8 510.0,212.0 C510.3,209.2 513.5,206.5 513.0,204.0 C512.5,201.5 505.6,200.1 507.0,197.0 Z" fill="#0a622c"/>
<path d="M612.0,190.0 C609.7,188.3 601.9,186.1 598.0,184.0 C594.1,181.9 590.9,177.2 588.5,177.2 C586.1,177.2 585.6,182.1 583.8,184.0 C581.9,185.9 578.9,186.9 577.4,188.7 C575.9,190.5 575.7,193.2 575.0,195.0 C574.3,196.8 573.6,197.3 573.4,199.8 C573.2,202.3 573.3,206.5 574.0,210.0 C574.7,213.5 575.8,218.1 577.4,221.0 C579.0,223.9 580.9,226.3 583.8,227.6 C586.7,228.9 591.3,229.0 595.0,229.0 C598.7,229.0 603.1,229.2 606.0,227.6 C608.9,226.0 612.1,222.5 612.5,219.6 C612.9,216.7 608.6,212.4 608.5,210.0 C608.4,207.6 611.8,206.8 612.0,205.0 C612.2,203.2 609.5,200.8 609.5,199.0 C609.5,197.2 611.6,195.5 612.0,194.0 C612.4,192.5 614.3,191.7 612.0,190.0 Z" fill="#0a622c"/>
<path d="M518.0,212.0 C520.3,209.0 526.0,206.7 530.0,206.0 C534.0,205.3 539.2,206.0 542.0,208.0 C544.8,210.0 547.3,214.8 547.0,218.0 C546.7,221.2 543.5,225.2 540.0,227.0 C536.5,228.8 530.0,229.5 526.0,229.0 C522.0,228.5 517.3,226.8 516.0,224.0 C514.7,221.2 515.7,215.0 518.0,212.0 Z" fill="#1c5c78"/>
<path d="M576.0,208.0 C577.7,206.0 582.3,203.7 586.0,204.0 C589.7,204.3 595.3,207.3 598.0,210.0 C600.7,212.7 602.7,217.1 602.0,220.0 C601.3,222.9 597.3,226.7 594.0,227.5 C590.7,228.3 585.0,226.9 582.0,225.0 C579.0,223.1 577.0,218.8 576.0,216.0 C575.0,213.2 574.3,210.0 576.0,208.0 Z" fill="#1c5c78"/>
<path d="M504.0,192.5 C505.5,189.6 511.0,182.2 515.0,178.0 C519.0,173.8 523.3,170.2 528.0,167.0 C532.7,163.8 537.7,160.9 543.0,159.0 C548.3,157.1 554.1,155.7 559.8,155.7 C565.5,155.7 571.7,157.1 577.0,159.0 C582.3,160.9 587.4,164.2 591.7,167.0 C596.0,169.8 599.5,172.8 603.0,176.0 C606.5,179.2 611.2,183.8 612.5,186.0 C613.8,188.2 613.4,189.5 611.0,189.0 C608.6,188.5 601.8,185.1 598.0,183.0 C594.2,180.9 592.3,179.0 588.5,176.5 C584.7,174.0 578.8,169.9 575.0,168.0 C571.2,166.1 568.5,165.7 566.0,165.0 C563.5,164.3 562.7,163.5 559.8,163.7 C556.9,163.9 553.1,163.9 548.6,166.0 C544.1,168.1 537.2,173.4 532.7,176.5 C528.2,179.6 526.0,181.3 521.5,184.5 C517.0,187.7 508.9,194.2 506.0,195.5 C503.1,196.8 502.5,195.4 504.0,192.5 Z" fill="#ee0458" stroke="#f65208" stroke-width="2"/>
<path d="M532.7,177.0 C532.8,175.1 538.1,173.2 541.0,171.5 C543.9,169.8 547.2,167.2 550.0,166.5 C552.8,165.8 556.4,167.8 558.0,167.5 C559.6,167.2 559.0,165.2 559.8,165.0 C560.6,164.8 560.3,165.8 563.0,166.5 C565.7,167.2 571.6,167.4 575.8,169.0 C580.0,170.6 587.0,173.7 588.0,176.0 C589.0,178.3 584.0,180.8 582.0,183.0 C580.0,185.2 577.3,186.3 575.8,189.0 C574.3,191.7 577.3,197.3 573.0,199.0 C568.7,200.7 554.3,200.7 550.0,199.0 C545.7,197.3 548.6,191.7 547.0,189.0 C545.4,186.3 543.0,185.0 540.6,183.0 C538.2,181.0 532.6,178.9 532.7,177.0 Z" fill="#000" stroke="#f65208" stroke-width="1.5"/>
<path d="M550.0,198.0 C554.2,195.2 568.5,195.2 573.0,198.0 C577.5,200.8 575.8,209.3 577.0,215.0 C578.2,220.7 578.8,226.2 580.0,232.0 C581.2,237.8 584.0,245.0 584.0,250.0 C584.0,255.0 584.0,260.7 580.0,262.0 C576.0,263.3 566.0,258.0 560.0,258.0 C554.0,258.0 547.2,263.3 544.0,262.0 C540.8,260.7 540.8,255.0 541.0,250.0 C541.2,245.0 543.8,237.8 545.0,232.0 C546.2,226.2 547.2,220.7 548.0,215.0 C548.8,209.3 545.8,200.8 550.0,198.0 Z" fill="#3a44c4"/>
<ellipse cx="553.5" cy="210" rx="3" ry="5" fill="#000"/>
<ellipse cx="569" cy="209" rx="3.2" ry="5" fill="#000"/>
<ellipse cx="555.5" cy="226" rx="1.8" ry="4.5" fill="#000"/>
<ellipse cx="570" cy="224.5" rx="2" ry="4.5" fill="#000"/>
<ellipse cx="561.5" cy="207" rx="1.2" ry="8" fill="#000"/>
<ellipse cx="561.5" cy="235" rx="1.5" ry="14" fill="#000"/>
<path d="M544.0,238.0 C545.2,236.0 548.2,235.3 550.0,236.0 C551.8,236.7 554.3,239.3 555.0,242.0 C555.7,244.7 555.2,250.0 554.0,252.0 C552.8,254.0 549.8,254.7 548.0,254.0 C546.2,253.3 543.7,250.7 543.0,248.0 C542.3,245.3 542.8,240.0 544.0,238.0 Z" fill="#000"/>
<path d="M571.0,239.0 C572.2,237.5 575.2,236.3 577.0,237.0 C578.8,237.7 581.3,240.8 582.0,243.0 C582.7,245.2 582.2,248.5 581.0,250.0 C579.8,251.5 576.8,252.7 575.0,252.0 C573.2,251.3 570.7,248.2 570.0,246.0 C569.3,243.8 569.8,240.5 571.0,239.0 Z" fill="#000"/>
<path d="M557.0,236.0 C557.5,232.3 559.6,228.7 560.0,232.0 C560.4,235.3 560.0,252.3 559.5,256.0 C559.0,259.7 557.4,257.3 557.0,254.0 C556.6,250.7 556.5,239.7 557.0,236.0 Z" fill="#000"/>
<path d="M564.0,232.0 C564.5,228.7 566.6,232.3 567.0,236.0 C567.4,239.7 567.0,250.7 566.5,254.0 C566.0,257.3 564.4,259.7 564.0,256.0 C563.6,252.3 563.5,235.3 564.0,232.0 Z" fill="#000"/>
<circle cx="560.6" cy="198" r="2" fill="#f65208"/>
<circle cx="542.5" cy="226" r="2" fill="#f65208"/>
<circle cx="578.5" cy="223" r="1.8" fill="#f65208"/>
<circle cx="549.4" cy="247.5" r="2.3" fill="#f65208"/>
<circle cx="576.5" cy="245" r="2.3" fill="#f65208"/>
<ellipse cx="562.5" cy="240" rx="1.2" ry="5" fill="#f65208"/>
<path d="M504.0,223.0 C501.7,223.8 500.1,225.8 499.0,228.0 C497.9,230.2 497.5,233.0 497.5,236.0 C497.5,239.0 497.9,242.8 499.0,246.0 C500.1,249.2 501.8,252.3 504.0,255.0 C506.2,257.7 509.0,259.8 512.0,262.0 C515.0,264.2 519.0,266.2 522.0,268.0 C525.0,269.8 527.5,270.8 530.0,273.0 C532.5,275.2 534.5,279.2 537.0,281.0 C539.5,282.8 543.5,285.5 545.0,284.0 C546.5,282.5 546.8,275.3 546.0,272.0 C545.2,268.7 542.2,266.3 540.0,264.0 C537.8,261.7 535.8,260.2 533.0,258.0 C530.2,255.8 525.6,253.5 523.0,251.0 C520.4,248.5 518.5,245.8 517.5,243.0 C516.5,240.2 516.8,236.5 517.0,234.0 C517.2,231.5 519.7,229.8 519.0,228.0 C518.3,226.2 515.5,223.8 513.0,223.0 C510.5,222.2 506.3,222.2 504.0,223.0 Z" fill="#f65208"/>
<path d="M503.0,227.0 C504.2,225.7 506.5,225.2 508.0,226.0 C509.5,226.8 511.7,229.0 512.0,232.0 C512.3,235.0 509.7,240.7 510.0,244.0 C510.3,247.3 514.3,250.3 514.0,252.0 C513.7,253.7 510.0,255.3 508.0,254.0 C506.0,252.7 503.2,247.3 502.0,244.0 C500.8,240.7 500.8,236.8 501.0,234.0 C501.2,231.2 501.8,228.3 503.0,227.0 Z" fill="#ee0458"/>
<path d="M619.0,225.0 C621.0,226.0 622.9,227.8 624.0,230.0 C625.1,232.2 625.7,235.0 625.5,238.0 C625.3,241.0 624.4,245.0 623.0,248.0 C621.6,251.0 619.3,253.5 617.0,256.0 C614.7,258.5 611.8,260.8 609.0,263.0 C606.2,265.2 602.5,267.2 600.0,269.0 C597.5,270.8 595.7,271.8 594.0,274.0 C592.3,276.2 592.0,280.3 590.0,282.0 C588.0,283.7 583.3,285.7 582.0,284.0 C580.7,282.3 581.2,275.3 582.0,272.0 C582.8,268.7 584.8,266.5 587.0,264.0 C589.2,261.5 592.3,259.5 595.0,257.0 C597.7,254.5 600.8,251.7 603.0,249.0 C605.2,246.3 607.2,243.7 608.0,241.0 C608.8,238.3 608.3,235.3 608.0,233.0 C607.7,230.7 605.3,228.5 606.0,227.0 C606.7,225.5 609.8,224.3 612.0,224.0 C614.2,223.7 617.0,224.0 619.0,225.0 Z" fill="#f65208"/>
<path d="M596.0,266.0 C598.2,264.3 602.3,260.7 603.0,262.0 C603.7,263.3 601.5,270.7 600.0,274.0 C598.5,277.3 596.0,281.0 594.0,282.0 C592.0,283.0 588.7,281.7 588.0,280.0 C587.3,278.3 588.7,274.3 590.0,272.0 C591.3,269.7 593.8,267.7 596.0,266.0 Z" fill="#ee0458"/>
<path d="M540.0,258.0 C543.7,256.7 552.7,256.0 560.0,256.0 C567.3,256.0 579.3,256.8 584.0,258.0 C588.7,259.2 592.0,262.3 588.0,263.0 C584.0,263.7 568.3,261.8 560.0,262.0 C551.7,262.2 541.3,264.7 538.0,264.0 C534.7,263.3 536.3,259.3 540.0,258.0 Z" fill="#f65208"/>
<path d="M519.0,234.0 C520.5,232.2 523.8,231.3 527.0,231.0 C530.2,230.7 535.0,230.8 538.0,232.0 C541.0,233.2 543.5,235.0 545.0,238.0 C546.5,241.0 547.0,246.3 547.0,250.0 C547.0,253.7 546.5,257.7 545.0,260.0 C543.5,262.3 540.5,264.3 538.0,264.0 C535.5,263.7 532.7,260.3 530.0,258.0 C527.3,255.7 524.0,252.7 522.0,250.0 C520.0,247.3 518.5,244.7 518.0,242.0 C517.5,239.3 517.5,235.8 519.0,234.0 Z" fill="#000"/>
<path d="M578.0,236.0 C579.5,233.5 582.7,232.0 586.0,231.0 C589.3,230.0 594.5,229.5 598.0,230.0 C601.5,230.5 605.2,231.8 607.0,234.0 C608.8,236.2 609.7,240.0 609.0,243.0 C608.3,246.0 605.3,249.3 603.0,252.0 C600.7,254.7 597.5,257.3 595.0,259.0 C592.5,260.7 590.3,262.5 588.0,262.0 C585.7,261.5 582.8,258.7 581.0,256.0 C579.2,253.3 577.5,249.3 577.0,246.0 C576.5,242.7 576.5,238.5 578.0,236.0 Z" fill="#000"/>
<path d="M548.5,275.0 C547.8,274.5 550.1,269.1 552.0,267.0 C553.9,264.9 556.7,263.2 560.0,262.5 C563.3,261.8 568.7,262.1 572.0,263.0 C575.3,263.9 578.2,266.0 580.0,268.0 C581.8,270.0 583.5,274.5 583.0,275.0 C582.5,275.5 579.8,272.1 577.0,271.0 C574.2,269.9 569.5,268.7 566.0,268.5 C562.5,268.3 558.9,268.9 556.0,270.0 C553.1,271.1 549.2,275.5 548.5,275.0 Z" fill="#000"/>
<path d="M497.0,281.5 L528.0,283.0" fill="none" stroke="#f65208" stroke-width="1.5"/>
<path d="M600.0,282.5 L625.0,282.0" fill="none" stroke="#f65208" stroke-width="1.5"/>
<path d="M480.0,295.5 L500.0,295.5" fill="none" stroke="#303038" stroke-width="1"/>
<path d="M526.0,283.0 C526.5,280.7 531.0,275.2 533.0,273.0 C535.0,270.8 536.3,269.5 538.0,270.0 C539.7,270.5 541.8,273.5 543.0,276.0 C544.2,278.5 545.8,283.0 545.0,285.0 C544.2,287.0 540.5,287.7 538.0,288.0 C535.5,288.3 532.0,287.8 530.0,287.0 C528.0,286.2 525.5,285.3 526.0,283.0 Z" fill="#fff" stroke="#f65208" stroke-width="2"/>
<rect x="531" y="281" width="2.5" height="2.5" fill="#000"/><rect x="533.5" y="283.5" width="2.5" height="2.5" fill="#000"/>
<path d="M548.5,277.0 C550.3,275.7 556.1,275.0 560.0,275.0 C563.9,275.0 570.0,275.7 572.0,277.0 C574.0,278.3 574.0,281.8 572.0,283.0 C570.0,284.2 563.8,284.0 560.0,284.0 C556.2,284.0 550.9,284.2 549.0,283.0 C547.1,281.8 546.7,278.3 548.5,277.0 Z" fill="#f65208"/>
<path d="M553.0,278.5 C554.3,277.8 561.5,277.6 564.0,278.0 C566.5,278.4 569.3,280.3 568.0,281.0 C566.7,281.7 558.5,282.4 556.0,282.0 C553.5,281.6 551.7,279.2 553.0,278.5 Z" fill="#ee0458"/>
<path d="M583.0,270.0 C584.0,266.3 587.5,261.7 590.0,262.0 C592.5,262.3 594.3,269.3 598.0,272.0 C601.7,274.7 608.5,276.5 612.0,278.0 C615.5,279.5 619.0,279.7 619.0,281.0 C619.0,282.3 615.8,285.0 612.0,286.0 C608.2,287.0 600.7,287.3 596.0,287.0 C591.3,286.7 586.2,286.8 584.0,284.0 C581.8,281.2 582.0,273.7 583.0,270.0 Z" fill="#f65208"/>
<path d="M586.0,270.0 C586.3,267.7 588.7,265.0 590.0,266.0 C591.3,267.0 591.3,273.5 594.0,276.0 C596.7,278.5 605.7,279.7 606.0,281.0 C606.3,282.3 599.0,284.2 596.0,284.0 C593.0,283.8 589.7,282.3 588.0,280.0 C586.3,277.7 585.7,272.3 586.0,270.0 Z" fill="#ee0458"/>
<path d="M520.0,291.5 C522.7,290.7 531.8,291.2 540.0,291.0 C548.2,290.8 564.3,288.7 569.0,290.0 C573.7,291.3 571.2,297.1 568.0,299.0 C564.8,300.9 556.3,301.3 550.0,301.5 C543.7,301.7 534.3,300.9 530.0,300.0 C525.7,299.1 525.7,297.4 524.0,296.0 C522.3,294.6 517.3,292.3 520.0,291.5 Z" fill="#f65208"/>
<path d="M546.0,294.0 C547.7,293.2 557.0,292.5 560.0,293.0 C563.0,293.5 565.7,296.2 564.0,297.0 C562.3,297.8 553.0,298.5 550.0,298.0 C547.0,297.5 544.3,294.8 546.0,294.0 Z" fill="#ee0458"/>
<circle cx="531" cy="295.5" r="3" fill="#f4d8e0" stroke="#ee0458" stroke-width="1.5"/>
<rect x="535" y="292" width="5" height="8" fill="#000"/>
<path d="M573.0,294.0 C573.8,292.8 577.2,291.7 580.0,291.5 C582.8,291.3 587.5,291.6 590.0,293.0 C592.5,294.4 595.3,298.7 595.0,300.0 C594.7,301.3 589.8,301.5 588.0,301.0 C586.2,300.5 586.2,297.3 584.0,297.0 C581.8,296.7 576.8,299.5 575.0,299.0 C573.2,298.5 572.2,295.2 573.0,294.0 Z" fill="#000"/>
<circle cx="602" cy="296.5" r="5.5" fill="#f65208"/>
<circle cx="602" cy="296" r="3" fill="#90f0b0" stroke="#ee0458" stroke-width="1"/>
<ellipse cx="540" cy="320.5" rx="11" ry="19" fill="#f65208"/>
<ellipse cx="540" cy="322.5" rx="7.5" ry="15" fill="#ee0458"/>
<ellipse cx="540" cy="318.5" rx="2.5" ry="11" fill="#f65208"/>
<ellipse cx="540" cy="333.5" rx="2.5" ry="2.5" fill="#f0b0c0"/>
<ellipse cx="591.7" cy="321" rx="10.4" ry="18.4" fill="#f65208"/>
<ellipse cx="591.7" cy="323" rx="6.9" ry="14.399999999999999" fill="#ee0458"/>
<ellipse cx="591.7" cy="319" rx="2.5" ry="10.399999999999999" fill="#f65208"/>
<ellipse cx="591.7" cy="333.4" rx="2.5" ry="2.5" fill="#f0b0c0"/>
<path d="M613.0,146.0 L618.0,146.0" fill="none" stroke="#505058" stroke-width="1"/>
<path d="M617.0,159.0 L623.0,159.0" fill="none" stroke="#404048" stroke-width="1"/>
<path d="M550.0,418.0 C558.4,417.8 566.7,418.4 575.0,420.5 C583.3,422.6 591.8,425.8 600.0,430.5 C608.2,435.2 617.4,442.1 624.0,448.5 C630.6,454.9 635.2,461.8 639.5,469.0 C643.8,476.2 647.2,483.9 649.5,492.0 C651.8,500.1 652.9,511.2 653.5,517.5 C654.1,523.8 653.4,526.2 653.0,530.0 C652.6,533.8 652.4,535.6 651.4,540.0 C650.4,544.4 648.9,551.1 647.2,556.6 C645.5,562.1 643.3,567.6 641.4,573.2 C639.5,578.8 637.4,585.0 635.6,590.0 C633.8,595.0 631.7,598.3 630.6,603.0 C629.5,607.7 629.5,613.8 629.0,618.0 C628.5,622.2 628.3,625.3 627.3,628.0 C626.3,630.7 625.1,632.5 623.0,634.0 C620.9,635.5 617.5,635.9 614.8,637.0 C612.0,638.1 609.8,639.3 606.5,640.5 C603.2,641.7 598.9,642.9 595.0,644.0 C591.1,645.1 586.2,646.2 583.0,647.0 C579.8,647.8 577.9,647.2 575.7,648.5 C573.5,649.8 572.1,652.2 570.0,654.7 C567.9,657.2 565.8,663.8 563.3,663.8 C560.8,663.8 557.2,657.1 554.7,654.7 C552.2,652.4 551.6,650.4 548.0,649.7 C544.4,649.0 537.4,651.1 533.0,650.5 C528.6,649.9 525.1,647.7 521.5,646.0 C517.9,644.3 514.8,642.2 511.5,640.5 C508.2,638.8 504.0,638.1 501.5,636.0 C499.0,633.9 497.9,631.3 496.5,628.0 C495.1,624.7 494.6,619.8 493.0,616.0 C491.4,612.2 488.8,609.3 486.6,605.0 C484.4,600.7 482.2,595.3 480.0,590.0 C477.8,584.7 475.5,578.6 473.3,573.0 C471.1,567.4 468.6,562.1 466.6,556.6 C464.7,551.1 462.7,544.4 461.6,540.0 C460.5,535.6 460.1,536.7 460.0,530.0 C459.9,523.3 460.1,509.2 461.0,500.0 C461.9,490.8 462.6,482.6 465.5,474.5 C468.4,466.4 472.9,458.3 478.5,451.5 C484.1,444.7 491.3,438.4 499.0,433.5 C506.7,428.6 516.0,424.6 524.5,422.0 C533.0,419.4 541.6,418.2 550.0,418.0 Z" fill="#0a622c" stroke="#465ae6" stroke-width="2.5"/>
<path d="M550.0,420.0 C558.3,419.8 566.7,420.4 575.0,422.5 C583.3,424.6 592.0,427.9 600.0,432.5 C608.0,437.1 616.5,443.8 622.8,450.0 C629.1,456.2 633.6,462.9 637.8,470.0 C642.0,477.1 645.5,484.8 647.8,492.7 C650.1,500.6 651.2,511.5 651.6,517.7 C652.0,523.9 650.6,526.3 650.0,530.0 C649.4,533.7 649.2,535.6 648.0,540.0 C646.8,544.4 644.7,551.6 643.0,556.6 C641.3,561.6 639.9,565.6 638.0,570.0 C636.1,574.4 633.6,578.6 631.4,583.0 C629.2,587.4 627.0,592.3 624.8,596.5 C622.6,600.7 619.1,604.7 618.0,608.0 C616.9,611.3 616.9,614.5 618.0,616.5 C619.1,618.5 623.4,618.1 624.8,619.8 C626.2,621.4 626.9,624.4 626.4,626.4 C625.9,628.4 623.1,631.2 621.5,632.0 C619.9,632.8 617.6,632.9 616.5,631.4 C615.4,629.9 615.6,625.5 614.8,623.0 C614.0,620.5 613.5,618.6 611.5,616.5 C609.5,614.4 606.0,611.9 603.0,610.6 C600.0,609.4 596.5,609.1 593.2,609.0 C589.9,608.9 585.7,609.1 583.2,609.8 C580.7,610.5 579.6,611.6 578.2,613.0 C576.8,614.4 575.8,617.4 575.0,618.0 C574.2,618.6 572.8,617.9 573.3,616.5 C573.8,615.1 576.2,612.3 578.2,609.8 C580.2,607.3 582.8,603.7 585.0,601.5 C587.2,599.3 588.8,597.6 591.5,596.5 C594.2,595.4 598.2,595.8 601.5,595.0 C604.8,594.2 608.5,593.2 611.5,591.5 C614.5,589.8 617.0,588.0 619.8,585.0 C622.5,582.0 625.6,577.9 628.0,573.2 C630.4,568.5 632.5,562.1 634.0,556.6 C635.5,551.1 636.4,545.3 637.2,540.0 C638.0,534.7 638.7,530.0 639.0,525.0 C639.3,520.0 639.7,516.2 639.0,510.0 C638.3,503.8 637.7,495.1 635.0,487.6 C632.3,480.1 627.8,471.7 622.8,465.0 C617.8,458.3 612.1,452.6 605.0,447.6 C597.9,442.6 588.3,437.3 580.0,435.0 C571.7,432.7 564.2,433.6 555.0,433.8 C545.8,434.0 533.3,433.7 525.0,436.0 C516.7,438.3 511.2,442.8 505.0,447.6 C498.8,452.4 492.2,458.8 487.6,465.0 C483.0,471.2 479.8,477.9 477.5,485.0 C475.2,492.1 474.3,501.0 473.8,507.7 C473.3,514.4 474.0,519.6 474.5,525.0 C475.0,530.4 475.2,534.7 476.6,540.0 C478.1,545.3 481.0,551.1 483.2,556.6 C485.4,562.1 487.8,568.2 490.0,573.2 C492.2,578.2 494.0,582.6 496.5,586.5 C499.0,590.4 501.9,593.9 505.0,596.5 C508.1,599.1 511.7,601.0 515.0,602.3 C518.3,603.5 521.8,603.6 524.8,604.0 C527.8,604.4 530.5,603.8 533.0,604.8 C535.5,605.8 537.6,607.9 539.7,609.8 C541.8,611.7 543.9,614.7 545.6,616.4 C547.3,618.1 549.6,618.7 549.7,619.8 C549.8,620.9 547.5,623.0 546.4,623.0 C545.3,623.0 544.7,621.5 543.0,619.8 C541.3,618.1 538.9,614.4 536.4,613.0 C533.9,611.6 531.1,611.5 528.0,611.5 C524.9,611.5 520.8,611.9 518.0,613.0 C515.2,614.1 513.0,615.8 511.5,618.0 C510.0,620.2 509.2,623.5 509.0,626.4 C508.8,629.3 510.7,633.6 510.0,635.5 C509.3,637.4 506.8,638.4 505.0,638.0 C503.2,637.6 500.3,634.9 499.0,633.0 C497.7,631.1 496.7,628.3 497.4,626.4 C498.1,624.5 502.6,623.6 503.0,621.4 C503.4,619.2 501.7,616.3 500.0,613.0 C498.3,609.7 495.2,605.3 493.0,601.5 C490.8,597.7 489.1,594.7 486.6,590.0 C484.2,585.3 480.8,578.8 478.3,573.2 C475.8,567.6 473.6,562.1 471.6,556.6 C469.7,551.1 467.9,545.3 466.6,540.0 C465.3,534.7 464.3,531.7 463.8,525.0 C463.3,518.3 463.2,508.3 463.8,500.0 C464.4,491.7 464.8,482.9 467.5,475.0 C470.2,467.1 474.6,459.3 480.0,452.6 C485.4,445.9 492.5,439.8 500.0,435.0 C507.5,430.2 516.7,426.3 525.0,423.8 C533.3,421.3 541.7,420.2 550.0,420.0 Z" fill="#ee0458" stroke="#f65208" stroke-width="2"/>
<path d="M496.5,586.5 C498.3,587.2 501.9,593.9 505.0,596.5 C508.1,599.1 511.7,601.0 515.0,602.3 C518.3,603.5 521.8,603.6 524.8,604.0 C527.8,604.4 530.5,603.8 533.0,604.8 C535.5,605.8 537.6,607.9 539.7,609.8 C541.8,611.7 543.9,614.7 545.6,616.4 C547.3,618.1 549.6,618.7 549.7,619.8 C549.8,620.9 547.5,623.0 546.4,623.0 C545.3,623.0 544.7,621.5 543.0,619.8 C541.3,618.1 538.9,614.4 536.4,613.0 C533.9,611.6 531.1,611.5 528.0,611.5 C524.9,611.5 520.8,611.9 518.0,613.0 C515.2,614.1 513.3,618.2 511.5,618.0 C509.7,617.8 508.8,614.5 507.0,612.0 C505.2,609.5 503.2,606.3 501.0,603.0 C498.8,599.7 494.8,594.8 494.0,592.0 C493.2,589.2 494.7,585.8 496.5,586.5 Z" fill="#f65208"/>
<path d="M619.8,585.0 C617.7,585.6 614.5,589.8 611.5,591.5 C608.5,593.2 604.8,594.2 601.5,595.0 C598.2,595.8 594.2,595.4 591.5,596.5 C588.8,597.6 587.2,599.3 585.0,601.5 C582.8,603.7 580.2,607.3 578.2,609.8 C576.2,612.3 573.8,615.1 573.3,616.5 C572.8,617.9 574.2,618.6 575.0,618.0 C575.8,617.4 576.8,614.4 578.2,613.0 C579.6,611.6 580.7,610.5 583.2,609.8 C585.7,609.1 589.9,608.9 593.2,609.0 C596.5,609.1 600.0,609.4 603.0,610.6 C606.0,611.9 609.8,617.3 611.5,616.5 C613.2,615.7 611.8,609.4 613.0,606.0 C614.2,602.6 617.2,599.0 619.0,596.0 C620.8,593.0 623.9,589.8 624.0,588.0 C624.1,586.2 621.9,584.4 619.8,585.0 Z" fill="#f65208"/>
<path d="M503.0,600.0 C503.7,599.2 507.2,604.3 508.0,607.0 C508.8,609.7 508.7,615.2 508.0,616.0 C507.3,616.8 504.8,614.7 504.0,612.0 C503.2,609.3 502.3,600.8 503.0,600.0 Z" fill="#e8202c"/>
<path d="M612.0,596.0 C612.5,593.3 616.7,589.7 618.0,590.0 C619.3,590.3 620.5,595.3 620.0,598.0 C619.5,600.7 616.3,606.3 615.0,606.0 C613.7,605.7 611.5,598.7 612.0,596.0 Z" fill="#e8202c"/>
<ellipse cx="503.5" cy="630" rx="3.2" ry="5.5" fill="#ee0458"/>
<ellipse cx="621" cy="625.5" rx="3.2" ry="5" fill="#ee0458"/>
<defs><radialGradient id="eye" cx="0.5" cy="0.6" r="0.55"><stop offset="0" stop-color="#0c6444"/><stop offset="0.55" stop-color="#1c5c78"/><stop offset="1" stop-color="#3c5cd0"/></radialGradient></defs>
<ellipse cx="527.2" cy="630" rx="17.2" ry="16" fill="url(#eye)"/>
<ellipse cx="597" cy="626.4" rx="19.3" ry="16.5" fill="url(#eye)"/>
<path d="M546.0,622.0 C547.0,618.5 549.4,619.1 552.0,619.0 C554.6,618.9 558.3,621.6 561.5,621.5 C564.7,621.4 568.4,618.4 571.0,618.5 C573.6,618.6 576.0,618.4 577.0,622.0 C578.0,625.6 577.3,636.5 577.0,640.0 C576.7,643.5 576.4,641.1 575.0,643.0 C573.6,644.9 570.7,649.4 568.5,651.5 C566.3,653.6 564.1,655.8 561.6,655.5 C559.1,655.2 555.7,652.1 553.3,650.0 C550.9,647.9 548.2,644.7 547.0,643.0 C545.8,641.3 546.2,643.5 546.0,640.0 C545.8,636.5 545.0,625.5 546.0,622.0 Z" fill="#f65208" stroke="#465ae6" stroke-width="1.2"/>
<path d="M546.7,639.7 C546.7,638.5 550.5,642.3 553.0,642.5 C555.5,642.7 558.7,641.0 561.5,641.0 C564.3,641.0 567.8,642.7 570.0,642.5 C572.2,642.3 575.3,638.2 575.0,639.7 C574.7,641.2 570.5,648.9 568.3,651.4 C566.1,653.9 564.1,655.0 561.6,654.7 C559.1,654.4 555.8,652.2 553.3,649.7 C550.8,647.2 546.8,640.9 546.7,639.7 Z" fill="#ee0458"/>
<path d="M548.0,624.0 C548.9,622.1 551.7,622.0 553.0,622.5 C554.3,623.0 555.5,624.3 556.0,627.0 C556.5,629.7 556.7,636.3 555.8,638.5 C554.9,640.7 551.9,640.8 550.5,640.0 C549.1,639.2 547.9,636.7 547.5,634.0 C547.1,631.3 547.1,625.9 548.0,624.0 Z" fill="#000"/>
<path d="M565.5,627.5 C566.2,624.7 568.0,623.8 569.5,623.0 C571.0,622.2 573.6,620.3 574.5,622.5 C575.4,624.7 575.4,633.1 575.0,636.0 C574.6,638.9 573.7,639.3 572.0,640.0 C570.3,640.7 566.1,642.1 565.0,640.0 C563.9,637.9 564.8,630.3 565.5,627.5 Z" fill="#000"/>
<circle cx="561.6" cy="639" r="1.8" fill="#4060d0"/>
<path d="M520.0,414.0 C522.5,412.8 555.0,411.0 575.0,411.0 C595.0,411.0 624.5,413.0 640.0,414.0 C655.5,415.0 668.0,415.0 668.0,417.0 C668.0,419.0 649.7,424.8 640.0,426.0 C630.3,427.2 618.3,424.8 610.0,424.0 C601.7,423.2 598.3,421.9 590.0,421.0 C581.7,420.1 571.7,419.7 560.0,418.5 C548.3,417.3 517.5,415.2 520.0,414.0 Z" fill="#14144c"/>
<path d="M507.6,412.5 C513.0,412.0 528.8,410.1 540.0,409.5 C551.2,408.9 561.7,408.7 575.0,408.8 C588.3,408.9 606.7,409.5 620.0,410.0 C633.3,410.5 647.0,411.2 655.0,412.0 C663.0,412.8 665.8,414.5 668.0,415.0" fill="none" stroke="#5a5ae0" stroke-width="2"/>
<path d="M600.0,418.8 C606.7,419.8 626.7,422.0 640.0,425.0 C653.3,428.0 668.7,432.8 680.0,437.0 C691.3,441.2 703.3,447.8 708.0,450.0" fill="none" stroke="#38388c" stroke-width="1.5"/>
<path d="M480.0,436.0 C484.2,434.3 496.2,428.9 505.0,426.0 C513.8,423.1 528.0,420.0 532.6,418.8" fill="none" stroke="#38388c" stroke-width="1.5"/>
<path d="M560.0,420.0 C565.0,420.3 580.0,420.0 590.0,422.0 C600.0,424.0 615.0,430.3 620.0,432.0" fill="none" stroke="#4848c0" stroke-width="1.5"/>
</g>
</svg>
<svg class="abs" style="left:1060px;top:734px" width="15" height="15" viewBox="1060 734 15 15" shape-rendering="crispEdges">
<g stroke="#fff" stroke-width="1.2"><path d="M1061,748 L1074,735 M1065,748 L1074,739 M1069,748 L1074,743"/></g>
<g stroke="#808080" stroke-width="1.4"><path d="M1062.5,748.5 L1074.5,736.5 M1066.5,748.5 L1074.5,740.5 M1070.5,748.5 L1074.5,744.5"/></g>
</svg>
</body></html>
